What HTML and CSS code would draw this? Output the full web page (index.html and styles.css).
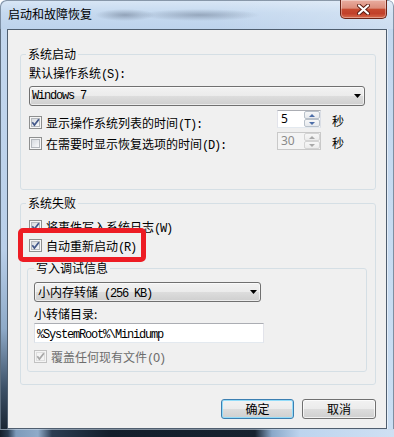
FILE: index.html
```html
<!DOCTYPE html>
<html lang="zh-CN">
<head>
<meta charset="utf-8">
<title>启动和故障恢复</title>
<link rel="stylesheet" href="styles.css">
</head>
<body>
<div class="window">
  <div class="titlebar">
    <span class="title">启动和故障恢复</span>
    <div class="close">
      <svg width="13" height="11" viewBox="0 0 13 11"><path d="M2 1.5 L11 9.5 M11 1.5 L2 9.5" stroke="#5a1c12" stroke-width="4" stroke-linecap="round"/><path d="M2 1.5 L11 9.5 M11 1.5 L2 9.5" stroke="#ffffff" stroke-width="2.2" stroke-linecap="round"/></svg>
    </div>
  </div>
  <div class="middle">
    <div class="frame-l"></div>
    <div class="client">
      <fieldset class="group g1">
        <legend>系统启动</legend>
        <div class="label">默认操作系统<span class="k">(S):</span></div>
        <div class="combo combo-os"><span class="mono">Windows 7</span><svg class="arrow" width="7" height="4" viewBox="0 0 7 4"><path d="M0 0 H7 L3.5 4 Z" fill="#000"/></svg></div>
        <div class="spinrow r1">
          <div class="check"><svg class="cb"><use href="#cb-on"/></svg><span class="ct">显示操作系统列表的时间<span class="k">(T):</span></span></div>
          <div class="spin"><span class="val">5</span><div class="btns"><span class="sb"><i class="up"></i></span><span class="sb"><i class="dn"></i></span></div></div>
          <span class="unit">秒</span>
        </div>
        <div class="spinrow r2">
          <div class="check"><svg class="cb"><use href="#cb-off"/></svg><span class="ct">在需要时显示恢复选项的时间<span class="k">(D):</span></span></div>
          <div class="spin disabled"><span class="val">30</span><div class="btns"><span class="sb"><i class="up"></i></span><span class="sb"><i class="dn"></i></span></div></div>
          <span class="unit">秒</span>
        </div>
      </fieldset>

      <fieldset class="group g2">
        <legend>系统失败</legend>
        <div class="check c-log"><svg class="cb"><use href="#cb-on"/></svg><span class="ct">将事件写入系统日志<span class="k">(W)</span></span></div>
        <div class="check c-restart"><svg class="cb"><use href="#cb-on"/></svg><span class="ct">自动重新启动<span class="k">(R)</span></span></div>
        <fieldset class="group g3">
          <legend>写入调试信息</legend>
          <div class="combo combo-dump"><span>小内存转储<span class="mono"> (256 KB)</span></span><svg class="arrow" width="7" height="4" viewBox="0 0 7 4"><path d="M0 0 H7 L3.5 4 Z" fill="#000"/></svg></div>
          <div class="label dir-label">小转储目录:</div>
          <div class="textbox"><span class="mono">%SystemRoot%\Minidump</span></div>
          <div class="check c-over disabled"><svg class="cb"><use href="#cb-dis"/></svg><span class="ct">覆盖任何现有文件<span class="k">(O)</span></span></div>
        </fieldset>
      </fieldset>

      <div class="buttons">
        <div class="btn btn-ok default">确定</div>
        <div class="btn btn-cancel">取消</div>
      </div>

      <div class="redbox"></div>
    </div>
    <div class="frame-r"></div>
  </div>
  <div class="frame-b"></div>
</div>

<svg class="defs" width="0" height="0" aria-hidden="true">
  <defs>
    <linearGradient id="cbg" x1="0" y1="0" x2="1" y2="1">
      <stop offset="0" stop-color="#d4d8dd"/>
      <stop offset="1" stop-color="#fbfbfc"/>
    </linearGradient>
    <symbol id="cb-on" viewBox="0 0 13 13">
      <rect x="0.5" y="0.5" width="12" height="12" fill="#f6f6f6" stroke="#8e8f8f"/>
      <rect x="2.5" y="2.5" width="8" height="8" fill="url(#cbg)" stroke="#b4b8bd"/>
      <path d="M3.3 6.3 L5.4 9.1 L9.9 3.2" fill="none" stroke="#44598a" stroke-width="1.7"/>
    </symbol>
    <symbol id="cb-off" viewBox="0 0 13 13">
      <rect x="0.5" y="0.5" width="12" height="12" fill="#f6f6f6" stroke="#8e8f8f"/>
      <rect x="2.5" y="2.5" width="8" height="8" fill="url(#cbg)" stroke="#b4b8bd"/>
    </symbol>
    <symbol id="cb-dis" viewBox="0 0 13 13">
      <rect x="0.5" y="0.5" width="12" height="12" fill="#f4f4f4" stroke="#c2c2c2"/>
      <rect x="2.5" y="2.5" width="8" height="8" fill="#f4f4f4" stroke="#dedede"/>
      <path d="M3.3 6.3 L5.4 9.1 L9.9 3.2" fill="none" stroke="#a8a8a8" stroke-width="1.7"/>
    </symbol>
  </defs>
</svg>
</body>
</html>
```

FILE: styles.css
```css
* { box-sizing: border-box; }

html, body {
  margin: 0;
  padding: 0;
}

body {
  width: 394px;
  height: 437px;
  overflow: hidden;
  background: #ffffff;
  font-family: "Noto Sans CJK SC", "Noto Sans", sans-serif;
  font-size: 12px;
  color: #000;
}

.window {
  width: 394px;
  height: 437px;
  display: flex;
  flex-direction: column;
  border-radius: 6px 6px 0 0;
  overflow: hidden;
  background: #c2d7ee;
}

/* ---------- title bar ---------- */
.titlebar {
  height: 29px;
  flex: none;
  display: flex;
  justify-content: space-between;
  align-items: flex-start;
  border-radius: 6px 6px 0 0;
  background:
    radial-gradient(ellipse 30px 6px at 125px 15px, rgba(30, 40, 60, 0.30), rgba(30, 40, 60, 0)),
    radial-gradient(ellipse 60px 6px at 200px 15px, rgba(30, 40, 60, 0.28), rgba(30, 40, 60, 0)),
    linear-gradient(90deg, rgba(255, 255, 255, 0) 55%, rgba(255, 255, 255, 0.25) 100%),
    linear-gradient(180deg, #d9e7f6 0%, #c5d9ef 45%, #bdd3ec 100%);
  box-shadow: inset 1px 1px 0 rgba(70, 85, 105, 0.55), inset -1px 0 0 rgba(70, 85, 105, 0.55);
}

.title {
  margin: 8px 0 0 8px;
  height: 12px;
  line-height: 12px;
  color: #000;
}

.close {
  margin-right: 7px;
  width: 47px;
  height: 19px;
  border: 1px solid #6b2417;
  border-top: none;
  border-radius: 0 0 5px 5px;
  background: linear-gradient(180deg, #e9ada0 0%, #dc8d7b 45%, #c6492f 52%, #c1402a 75%, #d76a4c 100%);
  box-shadow: inset 0 0 0 1px rgba(255, 255, 255, 0.35);
  display: flex;
  align-items: center;
  justify-content: center;
}

/* ---------- frames ---------- */
.middle {
  height: 400px;
  flex: none;
  display: flex;
}

.frame-l {
  width: 7px;
  background: linear-gradient(180deg, #c3d7ee 0%, #b9cfe9 55%, #8eaac8 75%, #3c5066 90%, #1b2735 100%);
  box-shadow: inset 1px 0 0 #5d6d7e;
}

.frame-r {
  width: 7px;
  background: linear-gradient(180deg, #c4d8ef 0%, #cadef3 100%);
  box-shadow: inset -1px 0 0 #7e8fa2, inset 1px 0 0 rgba(255, 255, 255, 0.5);
}

.frame-b {
  height: 8px;
  flex: none;
  background: linear-gradient(90deg, #141e2a 0, #2a3c50 8px, #7d9aba 16px, #8fabc9 38px, #2c3e53 52px, #131e2b 110px, #17222f 255px, #8aa8c9 272px, #bdd4ee 300px, #cfe0f3 394px);
  box-shadow: inset 0 1px 0 rgba(200, 215, 230, 0.6);
}

/* ---------- client area ---------- */
.client {
  width: 380px;
  height: 400px;
  border: 1px solid #4f5e6f;
  background: #f0f0f0;
  padding: 0 10px 0 12px;
  display: flex;
  flex-direction: column;
  position: relative;
  overflow: hidden;
}

fieldset.group {
  margin: 18px 0 0 0;
  padding: 0 31px 39px 8px;
  border: 1px solid #d5dfe5;
  border-radius: 3px;
  min-width: 0;
  width: 356px;
  flex: none;
}

fieldset.group legend {
  padding: 0 2px;
  margin-left: -3px;
  height: 12px;
  line-height: 12px;
}

.g2 {
  margin-top: 7px !important;
  padding: 0 0 12px 8px !important;
}

.g3 {
  margin: 10px 0 0 -2px !important;
  width: 340px !important;
  padding: 0 0 8px 6px !important;
}

.g3 legend {
  margin-left: 0 !important;
}

.label {
  margin-top: 7px;
  height: 12px;
  line-height: 12px;
  white-space: nowrap;
}

.k,
.mono {
  font-family: "Liberation Mono", "DejaVu Sans Mono", monospace;
  font-size: 12px;
  letter-spacing: -1.2px;
}

/* combobox */
.combo {
  display: flex;
  align-items: center;
  justify-content: space-between;
  height: 20px;
  flex: none;
  border: 1px solid #707070;
  border-radius: 3px;
  background: linear-gradient(180deg, #f2f2f2 0%, #ebebeb 50%, #dddddd 50%, #cfcfcf 100%);
  box-shadow: inset 0 0 0 1px rgba(255, 255, 255, 0.6);
  padding: 0 3px 0 2px;
  line-height: 12px;
}

.combo > span {
  height: 14px;
  line-height: 14px;
  white-space: nowrap;
}

.combo-os {
  width: 336px;
  margin-top: 7px;
}

.combo-dump {
  width: 227px;
  margin-top: 8px;
  padding-left: 3px;
}

.arrow {
  display: block;
  flex: none;
}

/* checkbox rows */
.check {
  display: flex;
  align-items: flex-start;
  gap: 4px;
  height: 13px;
  flex: none;
}

.ct {
  display: block;
  height: 13px;
  line-height: 13px;
  white-space: nowrap;
}

.cb {
  width: 13px;
  height: 13px;
  flex: none;
  display: block;
}

.check.disabled {
  color: #6d6d6d;
}

.c-log { margin-top: 11px; }
.c-restart { margin-top: 6px; }
.c-over { margin-top: 7px; }

/* spin rows */
.spinrow {
  display: flex;
  align-items: flex-start;
  height: 18px;
  flex: none;
  margin-top: 4px;
}

.r1 .check { margin-top: 6px; }
.r2 .check { margin-top: 5px; }

.spin {
  margin-left: auto;
  width: 44px;
  height: 18px;
  display: flex;
  border: 1px solid;
  border-color: #abadb3 #dbdfe6 #e3e9ef #e2e3ea;
  background: #fff;
  flex: none;
}

.spin .val {
  flex: 1;
  padding-left: 3px;
  font-family: "Noto Sans", "Liberation Sans", sans-serif;
  font-size: 12px;
  line-height: 15px;
}

.btns {
  width: 16px;
  display: flex;
  flex-direction: column;
}

.sb {
  flex: 1;
  display: flex;
  align-items: center;
  justify-content: center;
  border: 1px solid #b9c1ca;
  border-radius: 2px;
  background: linear-gradient(180deg, #f6f7f8 0%, #e6e9ed 100%);
}

.sb i {
  display: block;
  width: 0;
  height: 0;
  border-left: 3px solid transparent;
  border-right: 3px solid transparent;
}

.sb .up { border-bottom: 3px solid #4d6ea8; }
.sb .dn { border-top: 3px solid #4d6ea8; }

.spin.disabled {
  background: #f4f4f4;
  border-color: #c9c9c9;
  color: #8a8a8a;
}

.spin.disabled .sb {
  border-color: #d4d4d4;
  background: linear-gradient(180deg, #f7f7f7 0%, #ececec 100%);
}

.spin.disabled .up { border-bottom-color: #a9a9a9; }
.spin.disabled .dn { border-top-color: #a9a9a9; }

.unit {
  margin: 5px 0 0 11px;
  height: 12px;
  line-height: 12px;
  flex: none;
}

/* debug info */
.dir-label {
  margin-top: 6px;
}

.textbox {
  margin-top: 3px;
  width: 230px;
  height: 20px;
  flex: none;
  border: 1px solid;
  border-color: #abadb3 #e2e3ea #e3e9ef #dbdfe6;
  background: #fff;
  padding-left: 2px;
  line-height: 18px;
  overflow: hidden;
}

/* dialog buttons */
.buttons {
  display: flex;
  justify-content: flex-end;
  gap: 8px;
  margin-top: 14px;
  flex: none;
}

.btn {
  height: 20px;
  border: 1px solid #707070;
  border-radius: 3px;
  background: linear-gradient(180deg, #f2f2f2 0%, #ebebeb 50%, #dddddd 50%, #cfcfcf 100%);
  box-shadow: inset 0 0 0 1px rgba(255, 255, 255, 0.7);
  text-align: center;
  line-height: 18px;
}

.btn-ok { width: 73px; }
.btn-cancel { width: 74px; }

.btn.default {
  border-color: #3c7fb1;
  box-shadow: inset 0 0 0 1px #93dcf9;
}

/* annotation */
.redbox {
  position: absolute;
  left: 10px;
  top: 198px;
  width: 128px;
  height: 34px;
  border: 5px solid #ed1c24;
  border-radius: 5px;
}

.defs {
  display: block;
  width: 0;
  height: 0;
}
```
